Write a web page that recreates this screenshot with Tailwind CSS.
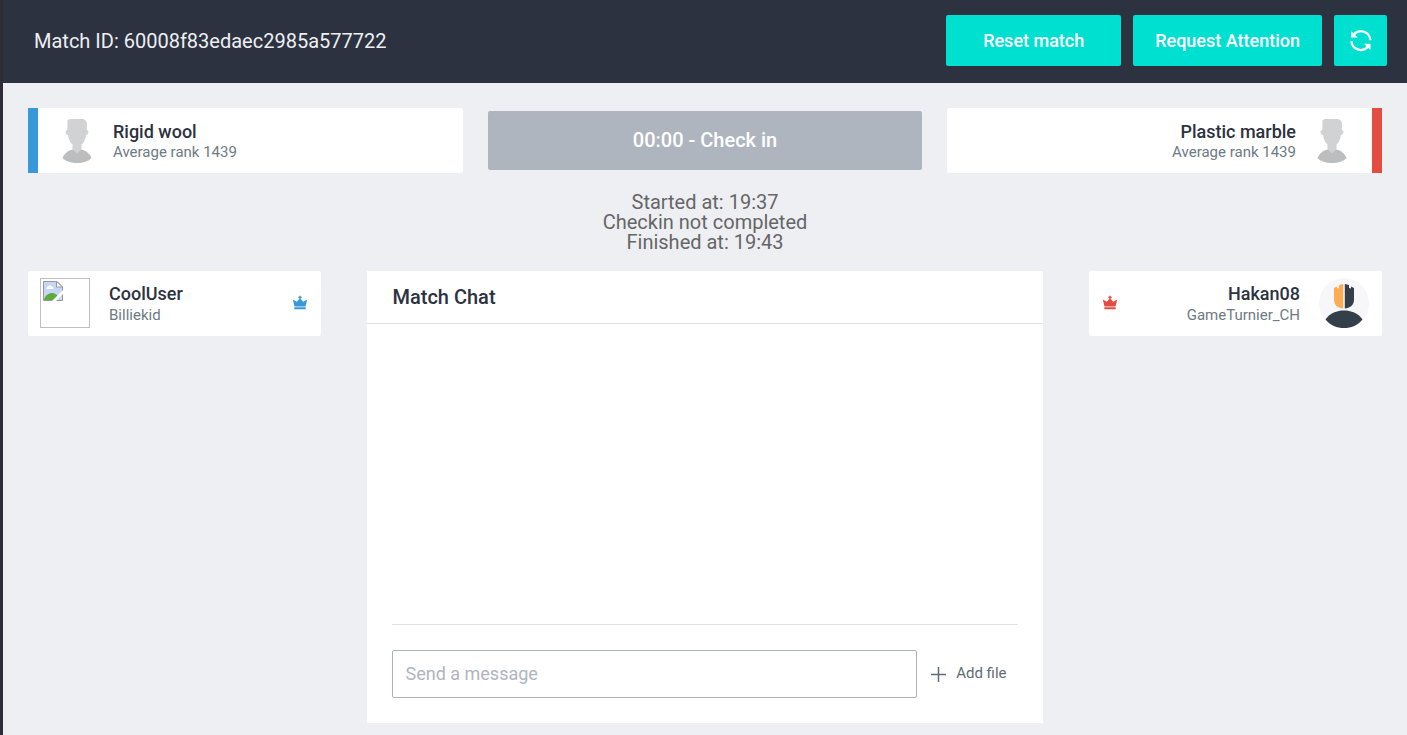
<!DOCTYPE html>
<html lang="en">
<head>
<meta charset="utf-8">
<meta name="viewport" content="width=device-width, initial-scale=1">
<title>Match</title>
<script src="https://cdn.jsdelivr.net/npm/@tailwindcss/browser@4"></script>
</head>
<body class="min-h-screen border-l-3 border-[#2e2d37] bg-[#eeeff3] font-['Roboto',sans-serif] text-[#2c3240]">
<svg class="hidden" aria-hidden="true">
  <symbol id="person" viewBox="0 0 50 50">
    <path d="M10.500 43c2-5 6-7.500 10-8.500l4-1h1l4 1c4 1 8 3.500 10 8.500-3 3.500-8.500 5-14.500 5s-11.500-1.500-14.500-5Z" fill="#bcbdbf"/>
    <path d="M15.500 5.500c.5-1.500 2.500-1.500 5-1.500h9c3 0 5.500 2 5.500 5l-.3 6c2.500.3 2.300 4.600-.7 5-.5 4-2 7.500-4.500 9.500v4.500L25 38.500 20.500 34v-4.500C18 27.500 16.500 24 16 20c-3-.4-3.200-4.700-.7-5L15.500 8c.3-1.200-.6-1.500 0-2.500Z" fill="#d0d2d4"/>
  </symbol>
  <symbol id="crown" viewBox="0 0 16 16">
    <path d="M.8 4.600 4.800 6.800 7 4.200h2l2.200 2.600 4-2.200L13.500 11.500h-11ZM2.300 12.300h11.400v2H2.300ZM7.300.800h1.400v1h1v1.300h-1v2H7.300V3.100h-1V1.800h1Z" fill="currentColor"/>
  </symbol>
</svg>

<header class="flex min-h-[83px] items-center justify-between gap-4 bg-[#2c3240] pr-5 pb-[2px] pl-[31px]">
  <h1 class="text-xl text-[#eeeff3]">Match ID: 60008f83edaec2985a577722</h1>
  <div class="flex gap-3 text-lg font-medium text-white">
    <button type="button" class="h-[51px] w-[175px] rounded-xs bg-[#00e0d0]">Reset match</button>
    <button type="button" class="h-[51px] rounded-xs bg-[#00e0d0] px-[22px]">Request Attention</button>
    <button type="button" aria-label="Refresh" class="flex h-[51px] w-[53px] items-center justify-center rounded-xs bg-[#00e0d0]">
      <svg class="size-6" viewBox="0 0 24 24" fill="none" stroke="currentColor" stroke-width="2.300">
        <path d="M4.800 5.500A9.400 9.400 0 0 1 21.300 11.300"/>
        <path d="M2.400 12.200A9.400 9.400 0 0 0 18.800 17.800"/>
        <path d="M2.200 2.300V8.600h6.600ZM21.500 21v-6.300h-6.600Z" fill="currentColor" stroke="none"/>
      </svg>
    </button>
  </div>
</header>

<main class="p-[25px] pb-3">
  <section class="grid grid-cols-3 items-center gap-[25px]">
    <div class="flex h-[65px] items-center rounded-r-xs border-l-10 border-[#3998d9] bg-white pb-[2px] pl-[14px]">
      <svg class="size-[50px]" aria-hidden="true"><use href="#person"/></svg>
      <div class="pt-1 pl-[11px]">
        <h2 class="text-lg/5 font-medium">Rigid wool</h2>
        <p class="text-[15px]/5 text-[#6e7a84]">Average rank 1439</p>
      </div>
    </div>
    <button type="button" class="h-[59px] rounded-xs bg-[#afb5bf] pb-[2px] text-xl font-medium text-white">00:00 - Check in</button>
    <div class="flex h-[65px] items-center justify-end rounded-l-xs border-r-10 border-[#e54c41] bg-white pr-[15px] pb-[2px] text-right">
      <div class="pt-1 pr-[11px]">
        <h2 class="text-lg/5 font-medium">Plastic marble</h2>
        <p class="text-[15px]/5 text-[#6e7a84]">Average rank 1439</p>
      </div>
      <svg class="size-[50px]" aria-hidden="true"><use href="#person"/></svg>
    </div>
  </section>

  <section class="pt-[19px] pb-[19px] text-center text-xl/5 text-[#666]">
    Started at: 19:37<br>
    Checkin not completed<br>
    Finished at: 19:43
  </section>

  <section class="grid grid-cols-[10fr_23fr_10fr] items-start gap-[46px]">
    <div class="flex h-[65px] items-center rounded-xs bg-white pr-[13px] pb-px pl-3">
      <div class="size-[50px] border border-[#c0c0c0] p-[2px]">
        <svg class="size-5" viewBox="0 0 20 20" role="img" aria-label="Image unavailable">
          <path d="M.500.500H14l5.500 5.500v13.500H.500Z" fill="#c6d6f6" stroke="#999"/>
          <path d="M3 8c0-2 2-2 2.500-3C7 3.500 9 4.500 9 6c2 0 2 2 1 2Z" fill="#fff"/>
          <path d="M1 19c1-5 5-7 8-7s5 2 6 3l-4 4Z" fill="#5bac3c"/>
          <path d="M9 20 20 9v4l-7 7Z" fill="#fff"/>
          <path d="M13.500.500V6h6Z" fill="#fff" stroke="#999"/>
        </svg>
      </div>
      <div class="grow pt-[3px] pl-[19px]">
        <h3 class="text-lg/5 font-medium">CoolUser</h3>
        <p class="text-[15px]/[22px] text-[#6e7a84]">Billiekid</p>
      </div>
      <svg class="size-4 text-[#3998d9]" aria-label="Captain" role="img"><use href="#crown"/></svg>
    </div>

    <section class="bg-white">
      <h2 class="border-b border-[#e3e4ea] px-[25px] py-3 text-xl font-medium">Match Chat</h2>
      <div class="px-[25px] pb-[25px]">
        <div class="h-[300px]"></div>
        <form class="flex items-center gap-[14px] border-t border-[#e0e1e8] pt-[25px] pr-[11px]">
          <input type="text" aria-label="Message" placeholder="Send a message" class="h-12 min-w-0 grow rounded-xs border border-[#adb0bf] px-3 pb-[2px] text-lg placeholder:text-[#afb5bf]">
          <button type="button" class="flex items-center gap-[10px] text-[15px] text-[#5f6b76]">
            <svg class="size-[15px]" viewBox="0 0 15 15" fill="none" stroke="currentColor" stroke-width="1.500" aria-hidden="true"><path d="M7.500 0v15M0 7.500h15"/></svg>
            <span class="pb-[2px]">Add file</span>
          </button>
        </form>
      </div>
    </section>

    <div class="flex h-[65px] items-center rounded-xs bg-white pr-[13px] pb-px pl-[13px] text-right">
      <svg class="size-4 text-[#e54c41]" aria-label="Captain" role="img"><use href="#crown"/></svg>
      <div class="grow pt-[3px] pr-[19px]">
        <h3 class="text-lg/5 font-medium">Hakan08</h3>
        <p class="text-[15px]/[22px] text-[#6e7a84]">GameTurnier_CH</p>
      </div>
      <svg class="size-[50px]" viewBox="0 0 50 50" aria-hidden="true">
        <circle cx="25" cy="25" r="25" fill="#f7f7f9"/>
        <path d="M24.200 6v24.500c-6-.5-9.200-4-9.200-9V10l3-1.500v2l2-.5V7Z" fill="#fdac53"/>
        <path d="M25.800 6v24.500c6-.5 9.200-4 9.200-9V10l-3-1.500v2l-2-.5V7Z" fill="#343f4a"/>
        <path d="M6.500 41.500C11 35 18 32.500 25 32.500s14 2.500 18.500 9C39 47.500 32 50 25 50S11 47.500 6.500 41.500Z" fill="#343f4a"/>
      </svg>
    </div>
  </section>
</main>
</body>
</html>
